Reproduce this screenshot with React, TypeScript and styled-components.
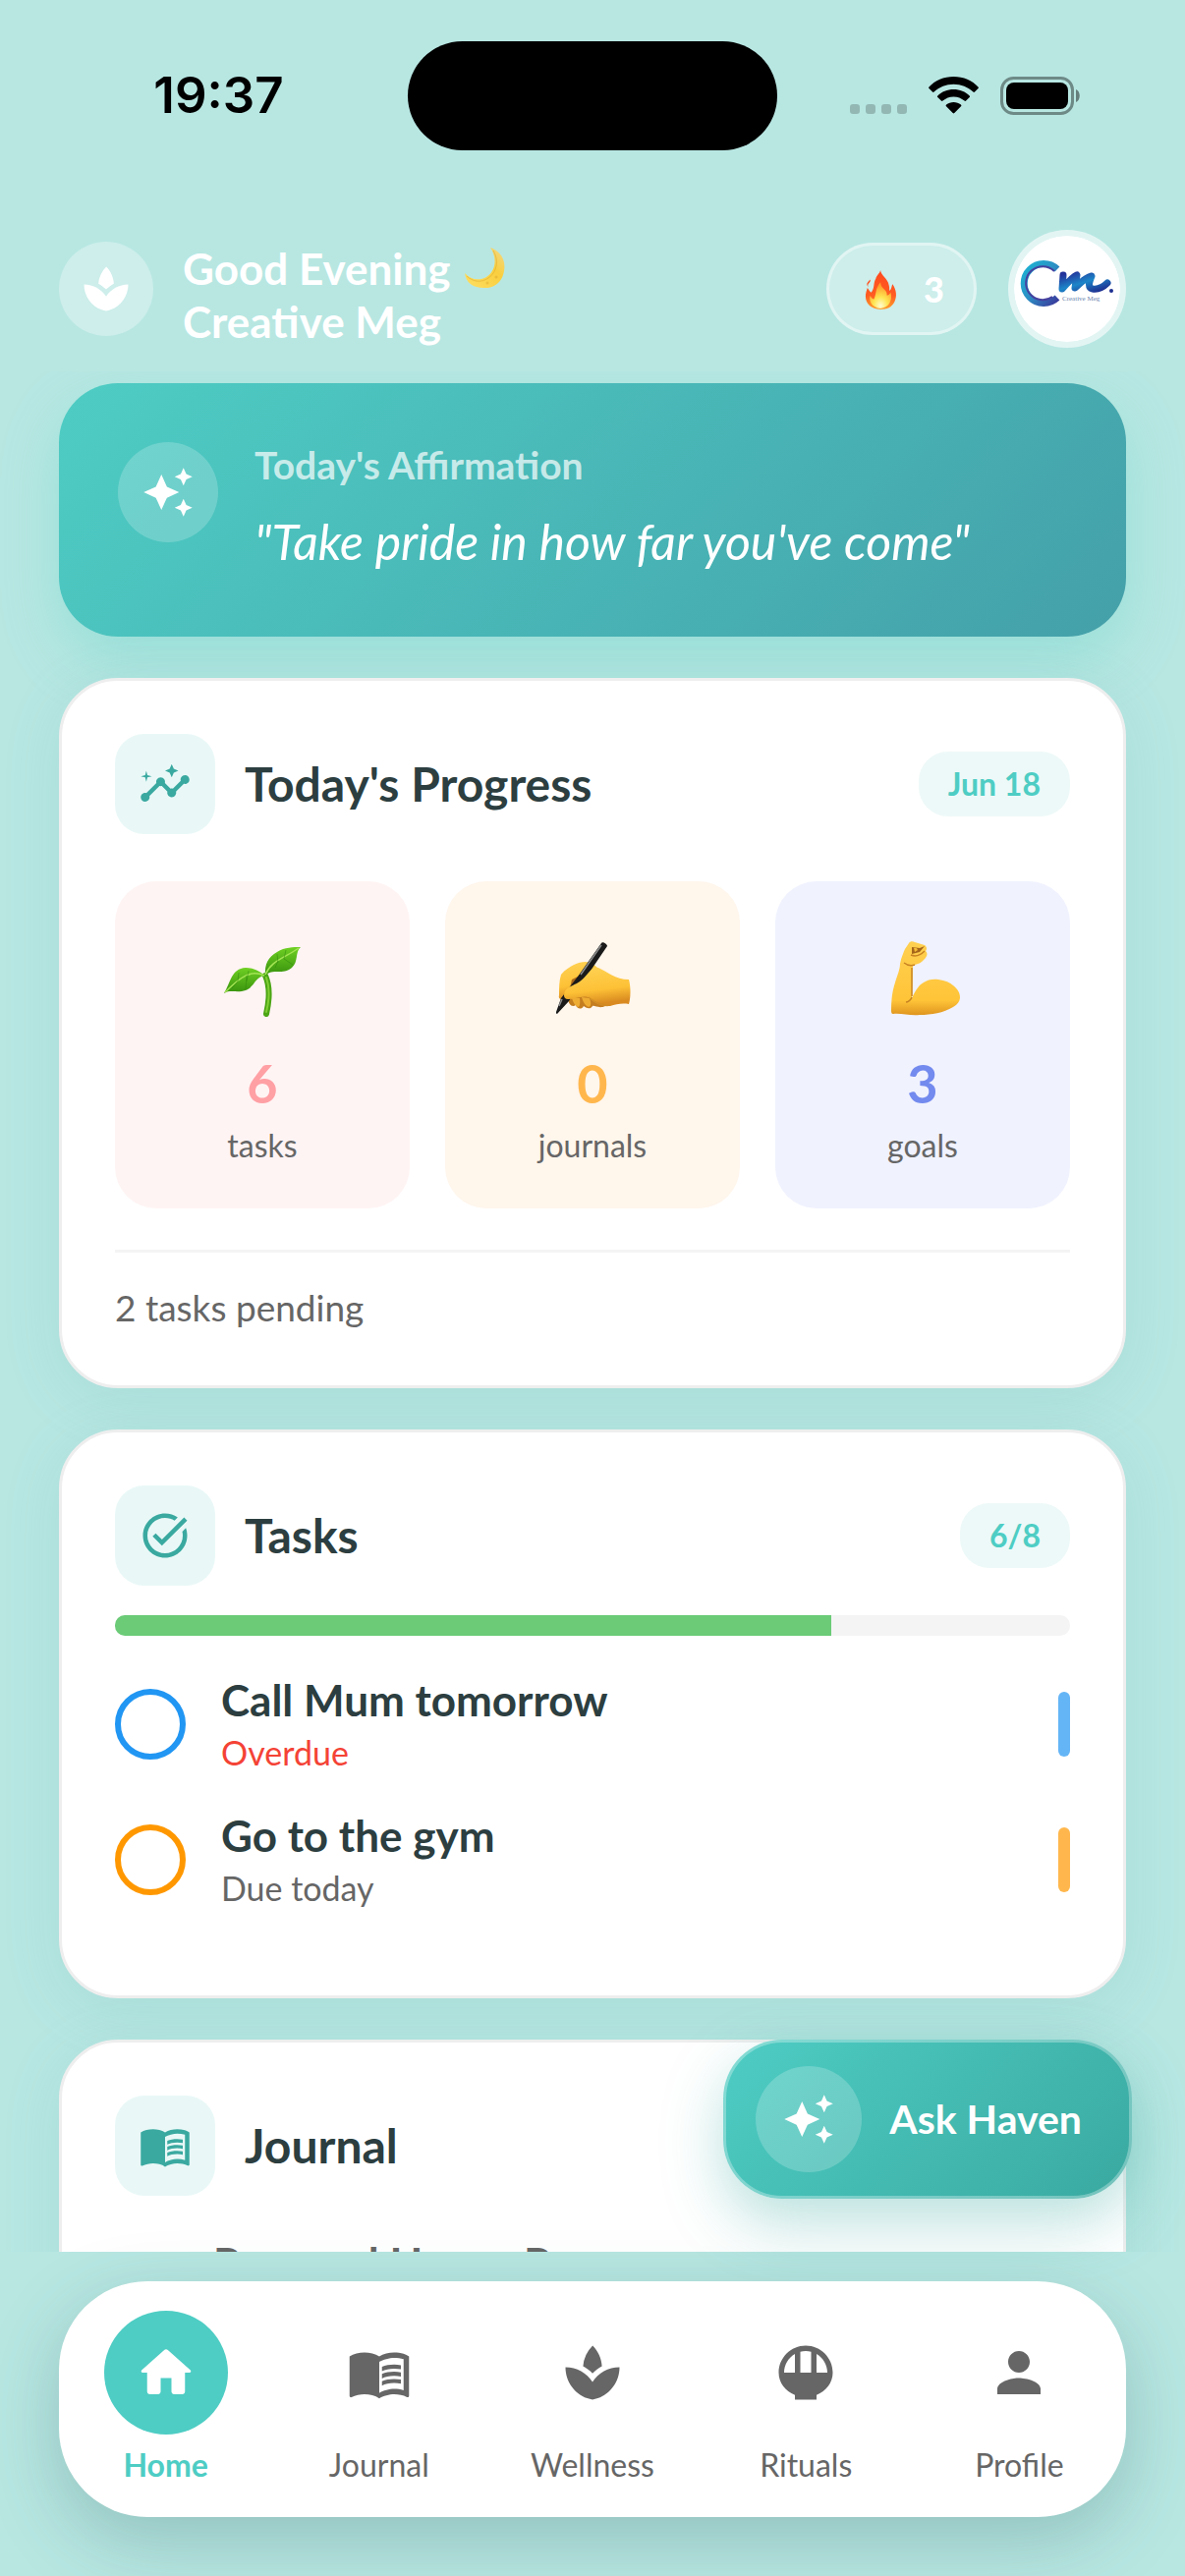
import React from "react";
import styled, { createGlobalStyle } from "styled-components";
import { MdSpa, MdAutoAwesome, MdInsights, MdTaskAlt, MdMenuBook, MdRiceBowl, MdPerson } from "react-icons/md";

const color = {
  page: "#b8e7e2",
  teal: "#4ecdc4",
  tealDark: "#3aa9a0",
  mint: "#e9f8f7",
  ink: "#2c3e40",
  grey: "#666666",
};

const GlobalStyle = createGlobalStyle`
  *, *::before, *::after { box-sizing: border-box; }
  body { margin: 0; background: ${color.page}; font-family: Lato, "Open Sans", sans-serif; color: ${color.ink}; }
  h1, h2, p, ul { margin: 0; padding: 0; }
  ul { list-style: none; }
  button { font: inherit; border: 0; padding: 0; background: none; color: inherit; }
  svg { display: block; flex: none; }
`;

const Screen = styled.div`
  height: 100vh;
  display: flex;
  flex-direction: column;
  overflow: hidden;
`;

/* ---------- status bar ---------- */

const StatusBar = styled.div`
  display: grid;
  grid-template-columns: 1fr 376px 1fr;
  align-items: center;
  height: 186px;
  padding-top: 8px;
`;

const Clock = styled.time`
  justify-self: center;
  padding-left: 30px;
  font: 600 51px/60px Inter, sans-serif;
  color: #000;
`;

const Island = styled.div`
  height: 111px;
  border-radius: 56px;
  background: #000;
`;

const StatusIcons = styled.div`
  display: flex;
  align-items: center;
  gap: 22px;
  padding-left: 74px;
`;

/* ---------- header ---------- */

const Header = styled.header`
  display: flex;
  align-items: center;
  padding: 48px 60px 24px;
`;

const RoundIcon = styled.span<{ $size: number; $alpha: number }>`
  display: flex;
  flex: none;
  align-items: center;
  justify-content: center;
  width: ${(p) => p.$size}px;
  height: ${(p) => p.$size}px;
  border-radius: 50%;
  background: rgba(255, 255, 255, ${(p) => p.$alpha});
  color: #fff;
`;

const Greeting = styled.h1`
  flex: 1;
  align-self: flex-end;
  margin-left: 30px;
  font-size: 44px;
  font-weight: 700;
  line-height: 54px;
  color: #fff;
`;

const GreetingLine = styled.span`
  display: flex;
  align-items: center;
  gap: 12px;
`;

const Streak = styled.button`
  display: flex;
  align-items: center;
  gap: 26px;
  height: 94px;
  padding: 0 30px 0 34px;
  border: 3px solid rgba(255, 255, 255, 0.4);
  border-radius: 47px;
  background: rgba(255, 255, 255, 0.3);
  color: #fff;
  font-size: 36px;
  font-weight: 900;
  line-height: 48px;
`;

const Avatar = styled.button`
  width: 120px;
  height: 120px;
  margin-left: 32px;
  border: 6px solid rgba(255, 255, 255, 0.6);
  border-radius: 50%;
  background: #fff;
  background-clip: padding-box;
  overflow: hidden;
`;

/* ---------- content ---------- */

const Content = styled.div`
  position: relative;
  flex: 1;
  min-height: 0;
`;

const Feed = styled.main`
  display: flex;
  flex-direction: column;
  gap: 42px;
  height: 100%;
  padding: 12px 60px 0;
  overflow: hidden;
`;

const Affirmation = styled.section`
  display: flex;
  flex: none;
  gap: 37px;
  padding: 60px;
  border-radius: 60px;
  background: linear-gradient(135deg, ${color.teal}, #44a0a9);
  box-shadow: 0 24px 60px rgba(78, 205, 196, 0.3);
  color: #fff;
`;

const AffirmationLabel = styled.h2`
  font-size: 39px;
  font-weight: 700;
  line-height: 46px;
  color: rgba(255, 255, 255, 0.7);
`;

const Quote = styled.p`
  margin-top: 18px;
  font-size: 50px;
  font-style: italic;
  font-weight: 400;
  line-height: 74px;
`;

const Card = styled.section`
  flex: none;
  padding: 54px;
  border: 3px solid #eeeeee;
  border-radius: 60px;
  background: #fff;
  box-shadow: 0 12px 60px rgba(78, 160, 160, 0.14);
`;

const CardHeader = styled.div`
  display: flex;
  align-items: center;
`;

const CardIcon = styled.span`
  display: flex;
  align-items: center;
  justify-content: center;
  width: 102px;
  height: 102px;
  border-radius: 30px;
  background: ${color.mint};
  color: ${color.tealDark};
`;

const CardTitle = styled.h2`
  flex: 1;
  margin-left: 30px;
  font-size: 48px;
  font-weight: 700;
  line-height: 56px;
`;

const Badge = styled.span`
  padding: 0 30px;
  border-radius: 30px;
  background: #edf9f8;
  color: ${color.teal};
  font-size: 32px;
  font-weight: 700;
  line-height: 66px;
`;

const Stats = styled.div`
  display: grid;
  grid-template-columns: repeat(3, 1fr);
  gap: 36px;
  margin-top: 48px;
`;

const Stat = styled.div<{ $bg: string }>`
  display: flex;
  flex-direction: column;
  align-items: center;
  padding: 54px 0 43px;
  border-radius: 42px;
  background: ${(p) => p.$bg};
`;

const StatValue = styled.strong<{ $color: string }>`
  margin: 28px 0 8px;
  font-size: 54px;
  font-weight: 700;
  line-height: 68px;
  color: ${(p) => p.$color};
`;

const StatLabel = styled.span`
  font-size: 32px;
  line-height: 42px;
  color: ${color.grey};
`;

const Pending = styled.p`
  margin-top: 42px;
  padding-top: 30px;
  border-top: 3px solid #f4f4f4;
  font-size: 37px;
  line-height: 51px;
  color: ${color.grey};
`;

const Track = styled.div`
  height: 21px;
  margin-top: 30px;
  border-radius: 10px;
  background: #f4f4f4;
  overflow: hidden;
`;

const Fill = styled.div`
  height: 100%;
  background: #6bcb77;
`;

const TaskList = styled.ul`
  padding: 21px 0 15px;
`;

const TaskRow = styled.li`
  display: flex;
  align-items: center;
  height: 138px;
`;

const TaskCheck = styled.input<{ $color: string }>`
  appearance: none;
  flex: none;
  width: 72px;
  height: 72px;
  margin: 0 36px 0 0;
  border: 6px solid ${(p) => p.$color};
  border-radius: 50%;
`;

const TaskLabel = styled.label`
  display: flex;
  flex: 1;
  flex-direction: column;
  gap: 4px;
`;

const TaskName = styled.span`
  font-size: 44px;
  font-weight: 700;
  line-height: 54px;
`;

const TaskDue = styled.span<{ $late?: boolean }>`
  font-size: 34px;
  line-height: 46px;
  color: ${(p) => (p.$late ? "#f44336" : color.grey)};
`;

const Priority = styled.span<{ $color: string }>`
  width: 12px;
  height: 66px;
  border-radius: 6px;
  background: ${(p) => p.$color};
`;

const Entry = styled.p`
  margin-top: 36px;
  padding-left: 100px;
  font-size: 44px;
  font-weight: 700;
  line-height: 64px;
  color: ${color.grey};
`;

const AskButton = styled.button`
  position: absolute;
  right: 54px;
  bottom: 54px;
  display: flex;
  align-items: center;
  gap: 28px;
  height: 162px;
  padding: 0 48px 0 30px;
  border: 3px solid rgba(255, 255, 255, 0.3);
  border-radius: 60px;
  background: linear-gradient(135deg, ${color.teal}, ${color.tealDark}) border-box;
  box-shadow: 0 24px 60px rgba(58, 168, 160, 0.35);
  color: #fff;
  font-size: 41px;
  font-weight: 700;
  line-height: 50px;
`;

/* ---------- bottom navigation ---------- */

const Nav = styled.nav`
  position: relative;
  display: flex;
  flex: none;
  height: 240px;
  margin: 30px 60px 60px;
  border-radius: 90px;
  background: #fff;
  box-shadow: 0 24px 72px rgba(40, 90, 90, 0.26);
`;

const NavItem = styled.a<{ $active?: boolean }>`
  display: flex;
  flex: 1;
  flex-direction: column;
  align-items: center;
  gap: 12px;
  padding-top: 30px;
  color: ${(p) => (p.$active ? color.teal : color.grey)};
  font-size: 32px;
  font-weight: ${(p) => (p.$active ? 700 : 400)};
  line-height: 38px;
  text-decoration: none;
`;

const NavIcon = styled.span<{ $active?: boolean }>`
  display: flex;
  align-items: center;
  justify-content: center;
  width: 126px;
  height: 126px;
  border-radius: 50%;
  background: ${(p) => (p.$active ? color.teal : "transparent")};
  color: ${(p) => (p.$active ? "#fff" : color.grey)};
`;

/* ---------- drawings ---------- */

const CellDots = () => (
  <svg width="58" height="38" viewBox="0 0 58 38" fill="#000" fillOpacity="0.2">
    {[0, 16, 32, 48].map((x) => (
      <rect key={x} x={x} y="28" width="10" height="10" rx="3" />
    ))}
  </svg>
);

const Wifi = () => (
  <svg width="51" height="38" viewBox="0 0 51 38">
    <path d="M25.500 0C35.500 0 44.500 4 50.500 10.500Q51.300 11.300 50.500 12.100L47 15.600Q46.200 16.300 45.400 15.600C40 10.500 33.200 7.700 25.500 7.700S11 10.500 5.600 15.600Q4.800 16.300 4 15.600L.5 12.100Q-.3 11.300.5 10.500C6.500 4 15.500 0 25.500 0ZM25.500 13C31.800 13 37.500 15.400 41.700 19.400Q42.500 20.200 41.700 21L38.100 24.600Q37.300 25.300 36.500 24.600C33.500 21.900 29.700 20.400 25.500 20.400S17.500 21.900 14.500 24.600Q13.700 25.300 12.900 24.600L9.300 21Q8.500 20.200 9.300 19.400C13.500 15.400 19.200 13 25.500 13ZM25.500 26C28.300 26 30.900 27 32.900 28.600Q33.800 29.400 33 30.200L26.300 37Q25.500 37.800 24.700 37L18 30.200Q17.200 29.400 18.100 28.600C20.100 27 22.700 26 25.500 26Z" />
  </svg>
);

const Battery = () => (
  <svg width="82" height="39" viewBox="0 0 82 39">
    <rect x="1.500" y="1.500" width="72" height="36" rx="12" fill="none" stroke="#000" strokeOpacity="0.4" strokeWidth="3" />
    <rect x="6" y="6" width="63" height="27" rx="8" />
    <path d="M77 13c5 2 5 11 0 13z" fillOpacity="0.45" />
  </svg>
);

const Moon = () => (
  <svg width="44" height="44" viewBox="0 0 44 44" role="img" aria-label="crescent moon">
    <defs>
      <linearGradient id="moon" x1="0" y1="1" x2="1" y2="0">
        <stop offset="0" stopColor="#ffdf63" />
        <stop offset=".6" stopColor="#f9cf3f" />
        <stop offset="1" stopColor="#f2d98a" />
      </linearGradient>
    </defs>
    <path fill="url(#moon)" d="M28 1C39 5 44 14 42 25 40 37 31 43 21 42 11 42 3 37 2 27 8 34 17 35 24 31 34 25 35 11 28 1Z" />
    <path fill="none" stroke="#dca72c" strokeOpacity=".55" d="M4 30C10 36 19 37 26 32 35 26 37 14 31 4" />
    <circle cx="34" cy="31" r="1.500" fill="#e0ad31" fillOpacity=".6" />
    <circle cx="25" cy="37" r="1.500" fill="#e0ad31" fillOpacity=".5" />
  </svg>
);

const Fire = () => (
  <svg width="36" height="42" viewBox="0 -3 36 42" role="img" aria-label="streak">
    <defs>
      <linearGradient id="fire" x1="0" y1="0" x2="0" y2="1">
        <stop offset="0" stopColor="#ff4a1f" />
        <stop offset=".65" stopColor="#ff5c22" />
        <stop offset="1" stopColor="#ffa12c" />
      </linearGradient>
      <radialGradient id="fireCore" cx=".5" cy=".9" r=".75">
        <stop offset="0" stopColor="#fffbd0" />
        <stop offset=".45" stopColor="#ffe552" />
        <stop offset="1" stopColor="#ff9e2c" />
      </radialGradient>
    </defs>
    <g transform="translate(1 -1) scale(.95)">
      <path fill="url(#fire)" d="M18 0C18 5 26 9 27 16 28 19 27 21 28 22 30 20 30 16 31 15 35 21 36 28 33 34 30 40 25 42 18 42 8 42 2 36 2 28 2 25 3 22 4 19 6 21 6 23 8 24 12 19 10 14 13 9 14 5 17 4 18 0ZM7 10C8 14 3 14 5 18 2 15 4 13 7 10Z" />
      <path fill="url(#fireCore)" d="M18 13C18 20 25 20 25 27 27 27 28 25 29 24 31 33 27 40 18 41 9 40 5 33 7 27 8 29 9 31 11 31 14 25 12 20 18 13Z" />
    </g>
  </svg>
);

const Seedling = () => (
  <svg width="90" height="90" viewBox="0 0 90 90" role="img" aria-label="seedling">
    <defs>
      <linearGradient id="leaf" x1="0" y1="0" x2="0" y2="1">
        <stop offset="0" stopColor="#6fd023" />
        <stop offset="1" stopColor="#37910d" />
      </linearGradient>
    </defs>
    <path fill="none" stroke="#4ba514" strokeWidth="6" strokeLinecap="round" d="M48 42C53 53 52 68 49 81" />
    <path fill="none" stroke="#81cd35" strokeWidth="2" strokeLinecap="round" d="M49 44C53 55 52 67 49 79" />
    <path fill="url(#leaf)" d="M48 42C42 38 37 34 28 34 13 35 13 49 6 60 12 56 20 60 28 57 38 53 37 43 48 42Z" />
    <path fill="url(#leaf)" d="M48 42C47 30 51 23 60 18 68 13 76 13 84 13 78 18 82 28 75 34 66 42 55 34 48 42Z" />
    <path fill="none" stroke="#a4e454" strokeWidth="1.500" d="M47 42C34 36 24 42 7 59M48 41C54 27 66 25 82 14" />
    <path fill="none" stroke="#2e850b" strokeOpacity=".5" d="M21 39L20 48 14 55M31 37L29 48M28 56L29 42M60 20L61 29M69 16L67 25 76 31M58 34L61 27" />
  </svg>
);

const WritingHand = () => (
  <svg width="90" height="90" viewBox="0 0 90 90" role="img" aria-label="writing hand">
    <defs>
      <linearGradient id="hand" x1="0" y1="0" x2=".2" y2="1">
        <stop offset="0" stopColor="#ffd355" />
        <stop offset=".65" stopColor="#fdc136" />
        <stop offset="1" stopColor="#d98a20" />
      </linearGradient>
    </defs>
    <path fill="#c47d1f" d="M20 64L44 60 58 73C52 76 47 72 45 73 43 77 38 75 36 73 34 77 29 76 28 72 24 75 20 71 20 64Z" />
    <path fill="#eeac33" d="M24 65Q26 72 30 74 33 74 32 65ZM34 64Q36 72 41 74 45 73 42 65Z" />
    <path fill="url(#hand)" d="M11 62C11 54 11 48 13 41 17 36 22 33 26 31 30 29 34 28 38 28 46 29 49 33 52 36L36 50 18 66C13 67 10 66 11 62Z" />
    <path fill="#a86719" d="M24 46L36 40 30 52 22 55Z" />
    <path fill="#1a1a1a" d="M54 9C55 7 60 10 60 12L43 37 29 54 21 68 9 81C8 81 8 80 8 79L13 65 30 43Z" />
    <path fill="none" stroke="#8c8c8c" strokeWidth="1.500" d="M54 11L33 41M14 66L11 73" />
    <path fill="url(#hand)" d="M16 62C16 55 23 53 29 50 36 46 38 42 42 38 45 34 47 33 51 34 60 38 68 46 82 46 84 54 84 64 82 71 75 70 69 71 63 73 53 74 47 70 42 65 36 61 29 66 20 66 17 66 16 64 16 62Z" />
    <path fill="none" stroke="#c98a24" strokeOpacity=".6" strokeWidth="1.500" d="M41 64C47 69 54 73 63 72" />
  </svg>
);

const Biceps = () => (
  <svg width="90" height="90" viewBox="0 0 90 90" role="img" aria-label="flexed biceps">
    <defs>
      <linearGradient id="arm" x1="0" y1="0" x2="0" y2="1">
        <stop offset="0" stopColor="#ffd050" />
        <stop offset=".8" stopColor="#ffc438" />
        <stop offset="1" stopColor="#df951f" />
      </linearGradient>
    </defs>
    <path fill="url(#arm)" d="M31 9C32 7 35 7 37 8L47 11C50 13 49 16 48 17 51 20 49 23 46 26 43 30 39 30 35 32L34 65C38 56 42 51 46 49 50 46 56 45 61 46 68 47 73 49 76 52 81 56 83 60 83 64 83 68 81 71 76 74 66 80 54 82 42 82 32 83 23 80 15 81 13 81 13 79 13 77 13 67 14 58 17 49 19 42 22 36 22 30 23 24 25 20 27 15Z" />
    <path fill="#a5661a" d="M34 13L42 14 47 12 42 18 34 20Z" />
    <path fill="#f5ba35" d="M36 14Q39 13 40 16L37 18Z" />
    <path fill="none" stroke="#c98422" strokeWidth="1.500" d="M34 64C33 67 30 69 28 69M26 29Q31 33 37 31M33 21Q40 24 47 17M34 34L34 63" />
  </svg>
);

const BrandLogo = () => (
  <svg width="108" height="108" viewBox="0 0 108 108" role="img" aria-label="Creative Meg">
    <defs>
      <linearGradient id="ring" x1="0" y1="0" x2="1" y2="1">
        <stop offset="0" stopColor="#1cb4d4" />
        <stop offset=".5" stopColor="#2c8fc4" />
        <stop offset="1" stopColor="#3a3a9c" />
      </linearGradient>
      <linearGradient id="script" x1="0" y1="0" x2="1" y2="1">
        <stop offset="0" stopColor="#23339a" />
        <stop offset=".5" stopColor="#1c86c9" />
        <stop offset="1" stopColor="#1d2f90" />
      </linearGradient>
    </defs>
    <path fill="none" stroke="url(#ring)" strokeWidth="7" d="M44 34A20 20 0 1 0 44 63" />
    <path fill="none" stroke="#46419f" strokeWidth="2" d="M41 36A17 17 0 1 0 39 62" />
    <path fill="none" stroke="url(#script)" strokeWidth="7" strokeLinecap="round" strokeLinejoin="round" d="M50 40L49 54C54 49 58 43 64 40L62 53C67 49 71 43 79 41 76 48 75 53 80 54 87 55 91 52 95 48" />
    <circle cx="99" cy="56" r="2" fill="#1d2f90" />
    <text x="49" y="66" fontSize="7" fontFamily="Liberation Serif, serif" fill="#6a84ae">Creative Meg</text>
  </svg>
);

const HomeIcon = () => (
  <svg width="66" height="66" viewBox="0 0 24 24" fill="currentColor">
    <path d="M10 19v-5h4v5c0 .55.45 1 1 1h3c.55 0 1-.45 1-1v-7h1.700c.46 0 .68-.57.33-.87L12.670 3.600c-.38-.34-.96-.34-1.340 0l-8.360 7.530c-.34.3-.13.87.33.87H5v7c0 .55.45 1 1 1h3c.55 0 1-.45 1-1z" />
  </svg>
);

/* ---------- data ---------- */

const stats = [
  { label: "tasks", value: 6, bg: "#fff4f4", tint: "#ffa0a5", Emoji: Seedling },
  { label: "journals", value: 0, bg: "#fff6ec", tint: "#ffb74d", Emoji: WritingHand },
  { label: "goals", value: 3, bg: "#f0f2fe", tint: "#738aee", Emoji: Biceps },
];

const tasks = [
  { id: "mum", name: "Call Mum tomorrow", due: "Overdue", late: true, ring: "#2196f3", bar: "#64b5f6" },
  { id: "gym", name: "Go to the gym", due: "Due today", late: false, ring: "#ff9800", bar: "#ffb74d" },
];

const done = 6;
const total = 8;

const links = [
  { label: "Home", icon: <HomeIcon />, active: true },
  { label: "Journal", icon: <MdMenuBook size={66} /> },
  { label: "Wellness", icon: <MdSpa size={66} /> },
  { label: "Rituals", icon: <MdRiceBowl size={66} /> },
  { label: "Profile", icon: <MdPerson size={66} /> },
];

export default function App() {
  return (
    <Screen>
      <GlobalStyle />
      <StatusBar>
        <Clock>19:37</Clock>
        <Island />
        <StatusIcons>
          <CellDots />
          <Wifi />
          <Battery />
        </StatusIcons>
      </StatusBar>

      <Header>
        <RoundIcon $size={96} $alpha={0.3}>
          <MdSpa size={54} />
        </RoundIcon>
        <Greeting>
          <GreetingLine>
            Good Evening <Moon />
          </GreetingLine>
          <GreetingLine>Creative Meg</GreetingLine>
        </Greeting>
        <Streak>
          <Fire />
          <span>3</span>
        </Streak>
        <Avatar>
          <BrandLogo />
        </Avatar>
      </Header>

      <Content>
        <Feed>
          <Affirmation>
            <RoundIcon $size={102} $alpha={0.2}>
              <MdAutoAwesome size={54} />
            </RoundIcon>
            <div>
              <AffirmationLabel>Today's Affirmation</AffirmationLabel>
              <Quote>"Take pride in how far you've come"</Quote>
            </div>
          </Affirmation>

          <Card>
            <CardHeader>
              <CardIcon>
                <MdInsights size={54} />
              </CardIcon>
              <CardTitle>Today's Progress</CardTitle>
              <Badge>Jun 18</Badge>
            </CardHeader>
            <Stats>
              {stats.map(({ label, value, bg, tint, Emoji }) => (
                <Stat key={label} $bg={bg}>
                  <Emoji />
                  <StatValue $color={tint}>{value}</StatValue>
                  <StatLabel>{label}</StatLabel>
                </Stat>
              ))}
            </Stats>
            <Pending>2 tasks pending</Pending>
          </Card>

          <Card>
            <CardHeader>
              <CardIcon>
                <MdTaskAlt size={54} />
              </CardIcon>
              <CardTitle>Tasks</CardTitle>
              <Badge>
                {done}/{total}
              </Badge>
            </CardHeader>
            <Track role="progressbar" aria-valuenow={done} aria-valuemax={total} aria-label="Tasks done">
              <Fill style={{ width: `${(done / total) * 100}%` }} />
            </Track>
            <TaskList>
              {tasks.map((t) => (
                <TaskRow key={t.id}>
                  <TaskCheck type="checkbox" id={t.id} $color={t.ring} />
                  <TaskLabel htmlFor={t.id}>
                    <TaskName>{t.name}</TaskName>
                    <TaskDue $late={t.late}>{t.due}</TaskDue>
                  </TaskLabel>
                  <Priority $color={t.bar} />
                </TaskRow>
              ))}
            </TaskList>
          </Card>

          <Card>
            <CardHeader>
              <CardIcon>
                <MdMenuBook size={54} />
              </CardIcon>
              <CardTitle>Journal</CardTitle>
            </CardHeader>
            <Entry>Personal Haven P</Entry>
          </Card>
        </Feed>

        <AskButton>
          <RoundIcon $size={108} $alpha={0.2}>
            <MdAutoAwesome size={54} />
          </RoundIcon>
          Ask Haven
        </AskButton>
      </Content>

      <Nav>
        {links.map((l) => (
          <NavItem key={l.label} href="#" $active={l.active}>
            <NavIcon $active={l.active}>{l.icon}</NavIcon>
            {l.label}
          </NavItem>
        ))}
      </Nav>
    </Screen>
  );
}
